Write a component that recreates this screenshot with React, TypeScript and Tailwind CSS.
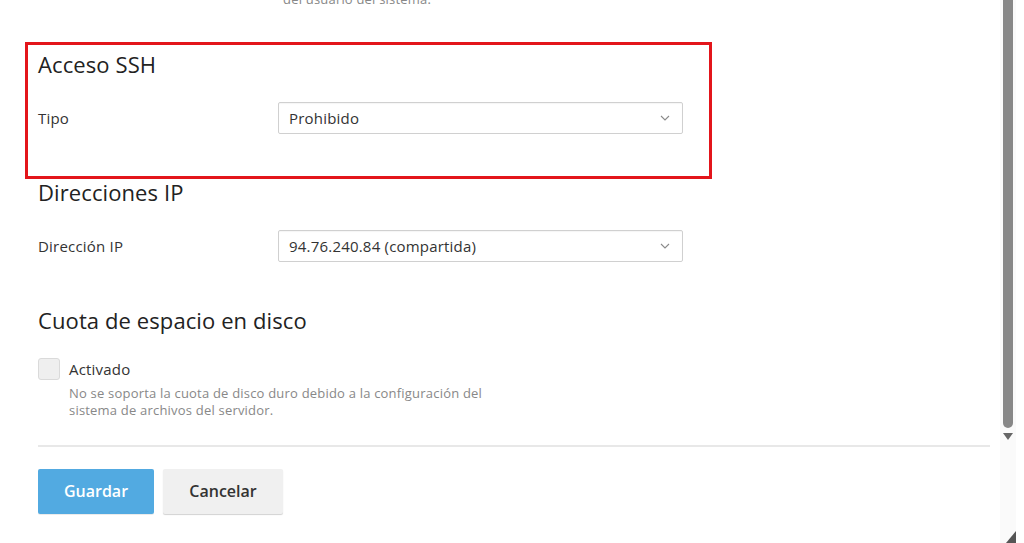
import React from "react";

const font = { fontFamily: '"Open Sans", "Noto Sans", sans-serif' };

const Chevron: React.FC = () => (
  <svg width="10" height="6" viewBox="0 0 10 6" className="text-[#8a8a8a]">
    <path d="M1 1l4 4 4-4" fill="none" stroke="currentColor" strokeWidth="1.1" />
  </svg>
);

const SelectBox: React.FC<{ value: string }> = ({ value }) => (
  <div className="flex h-[32px] w-[405px] items-center justify-between rounded-[2px] border border-[#d0d0d0] bg-white pl-[10px] pr-[12px] text-[15px] tracking-[0.2px] text-[#333] shadow-[inset_0_1px_1px_rgba(0,0,0,0.04)]">
    <span>{value}</span>
    <Chevron />
  </div>
);

const FieldRow: React.FC<{ label: string; value: string }> = ({ label, value }) => (
  <div className="flex items-center">
    <div className="w-[240px] text-[15px] tracking-[0.2px] text-[#333]">{label}</div>
    <SelectBox value={value} />
  </div>
);

const Heading: React.FC<{ children: React.ReactNode }> = ({ children }) => (
  <h2 className="h-[28px] text-[22px] font-medium leading-[28px] tracking-[0.1px] text-[#222]">{children}</h2>
);

export default function App() {
  return (
    <div className="flex h-[543px] w-[1024px] overflow-hidden bg-white" style={font}>
      <main className="flex w-[1000px] flex-col">
        {/* help text of the previous field, scrolled half out of view */}
        <div className="ml-[283px] mt-[-9px] h-[16px] text-[13px] leading-[16px] tracking-[0.2px] text-[#888]">
          del usuario del sistema.
        </div>

        {/* highlighted SSH block */}
        <section className="ml-[25px] mt-[35px] h-[137px] w-[687px] border-[3px] border-[#e3151b] pl-[10px] pt-[5px]">
          <Heading>Acceso SSH</Heading>
          <div className="mt-[24px]">
            <FieldRow label="Tipo" value="Prohibido" />
          </div>
        </section>

        <div className="pl-[38px]">
          <div className="-mt-[1px]">
            <Heading>Direcciones IP</Heading>
          </div>
          <div className="mt-[24px]">
            <FieldRow label="Dirección IP" value="94.76.240.84 (compartida)" />
          </div>

          <div className="mt-[44px]">
            <Heading>Cuota de espacio en disco</Heading>
          </div>
          <div className="mt-[24px] flex items-center gap-[9px]">
            <div className="h-[22px] w-[22px] rounded-[3px] border border-[#dadada] bg-[#efefef]" />
            <span className="text-[15px] tracking-[0.2px] text-[#333]">Activado</span>
          </div>
          <p className="ml-[31px] mt-[4px] text-[13px] leading-[17px] tracking-[0.2px] text-[#888]">
            No se soporta la cuota de disco duro debido a la configuración del
            <br />
            sistema de archivos del servidor.
          </p>
        </div>

        <div className="ml-[38px] mt-[26px] h-[2px] w-[952px] bg-[#e8e8e8]" />

        <div className="ml-[38px] mt-[22px] flex gap-[9px]">
          <button className="h-[45px] w-[116px] rounded-[2px] bg-[#52aae1] text-[16px] font-semibold text-white shadow-[0_1px_0_rgba(0,0,0,0.08)]">
            Guardar
          </button>
          <button className="h-[45px] w-[120px] rounded-[2px] bg-[#f0f0f0] text-[16px] font-semibold text-[#333] shadow-[0_1px_1px_rgba(0,0,0,0.18)]">
            Cancelar
          </button>
        </div>
      </main>

      {/* scrollbar */}
      <div className="flex w-[16px] flex-col items-center bg-[#fafafa]">
        <div className="h-[428px] w-[10px] rounded-b-full bg-[#888]" />
        <svg width="10" height="8" viewBox="0 0 10 8" className="mt-[5px]">
          <path d="M0 0h10L5 7z" fill="#666" />
        </svg>
        <div className="flex-1" />
        <svg width="10" height="12" viewBox="0 0 10 12" className="self-end">
          <path d="M10 0v12H0z" fill="#555" />
        </svg>
      </div>
      <div className="flex-1 bg-white" />
    </div>
  );
}
